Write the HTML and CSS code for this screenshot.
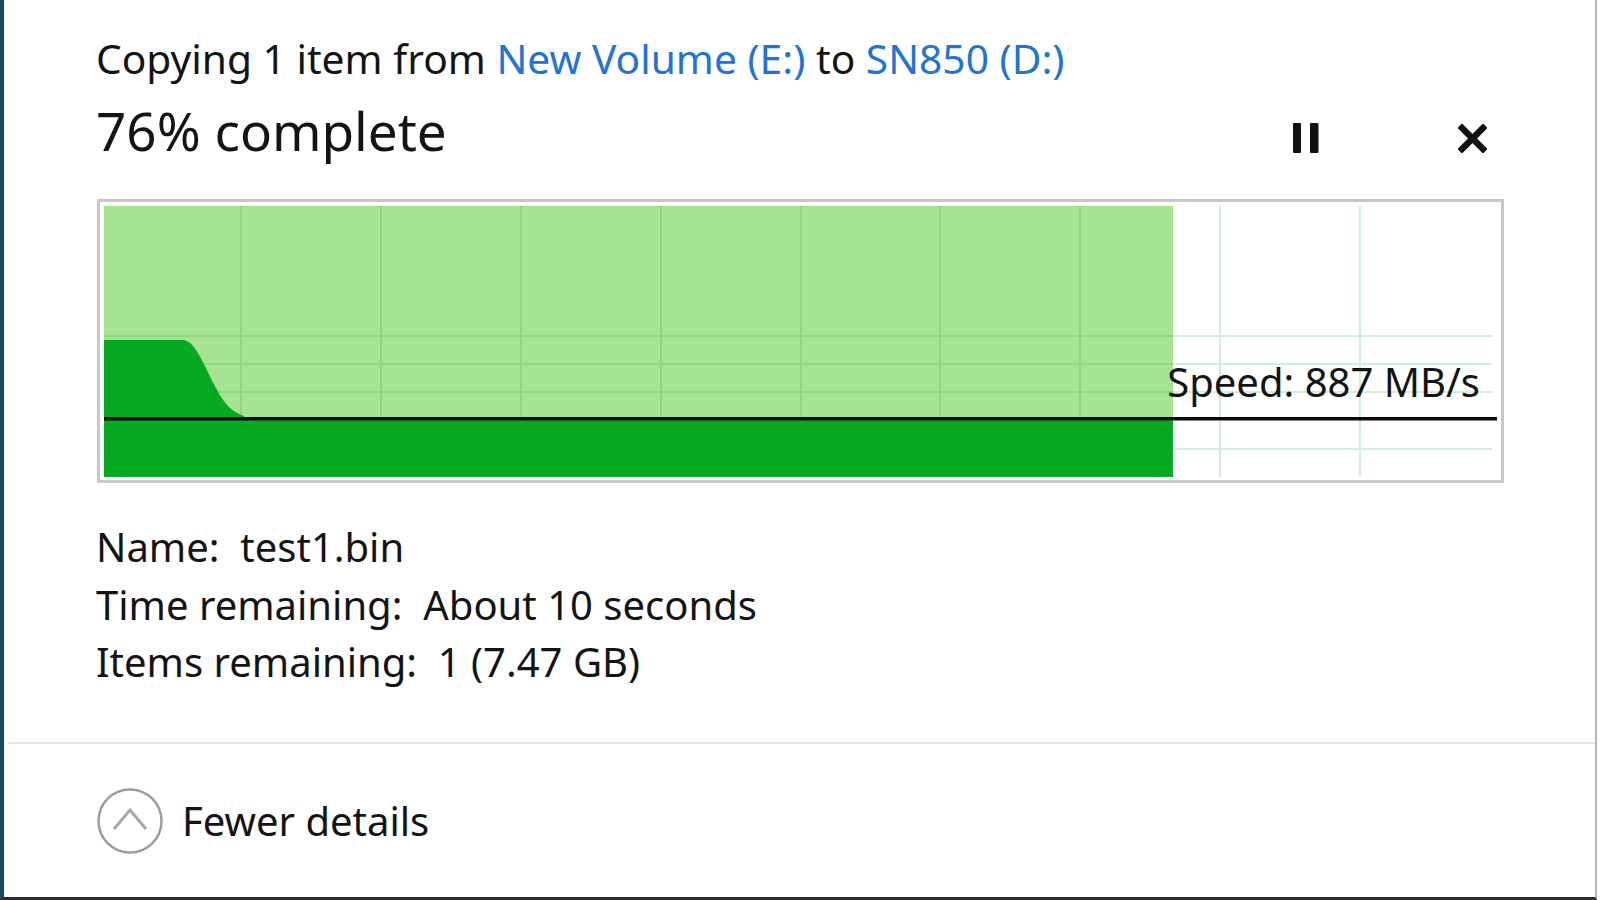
FILE: index.html
```html
<!DOCTYPE html>
<html lang="en">
<head>
    <meta charset="UTF-8">
    <meta name="viewport" content="width=device-width, initial-scale=1.0">
    <title>Copying</title>
    <link rel="stylesheet" href="styles.css">
</head>
<body>
    <div class="window">
        <div class="content">
            <div class="summary">
                Copying 1 item from <span class="link">New Volume (E:)</span> to <span class="link">SN850 (D:)</span>
            </div>

            <div class="title-row">
                <div class="percent">76% complete</div>
                <div class="controls">
                    <button class="icon-button" title="Pause">
                        <svg width="26" height="30" viewBox="0 0 26 30">
                            <rect x="0" y="0" width="8" height="30" rx="1" fill="#111"/>
                            <rect x="17" y="0" width="8.5" height="30" rx="1" fill="#111"/>
                        </svg>
                    </button>
                    <button class="icon-button" title="Cancel">
                        <svg width="29" height="29" viewBox="0 0 29 29">
                            <path d="M4 4 L25 25 M25 4 L4 25" stroke="#111" stroke-width="6.5" stroke-linecap="square"/>
                        </svg>
                    </button>
                </div>
            </div>

            <div class="graph">
                <div class="plot">
                    <svg width="1393" height="271" viewBox="0 0 1393 271">
                        <!-- grid behind the pending part -->
                        <g stroke="#d4ecda" stroke-width="2">
                            <line x1="137" y1="0" x2="137" y2="271"/>
                            <line x1="277" y1="0" x2="277" y2="271"/>
                            <line x1="417" y1="0" x2="417" y2="271"/>
                            <line x1="557" y1="0" x2="557" y2="271"/>
                            <line x1="697" y1="0" x2="697" y2="271"/>
                            <line x1="836" y1="0" x2="836" y2="271"/>
                            <line x1="976" y1="0" x2="976" y2="271"/>
                            <line x1="1116" y1="0" x2="1116" y2="271"/>
                            <line x1="1256" y1="0" x2="1256" y2="271"/>
                            <line x1="0" y1="130" x2="1388" y2="130"/>
                            <line x1="0" y1="158" x2="1388" y2="158"/>
                            <line x1="0" y1="186" x2="1388" y2="186"/>
                            <line x1="0" y1="243" x2="1388" y2="243"/>
                        </g>

                        <!-- progress so far -->
                        <rect x="0" y="0" width="1069" height="271" fill="#a6e392"/>
                        <g stroke="#92d77e" stroke-width="2">
                            <line x1="137" y1="0" x2="137" y2="212"/>
                            <line x1="277" y1="0" x2="277" y2="212"/>
                            <line x1="417" y1="0" x2="417" y2="212"/>
                            <line x1="557" y1="0" x2="557" y2="212"/>
                            <line x1="697" y1="0" x2="697" y2="212"/>
                            <line x1="836" y1="0" x2="836" y2="212"/>
                            <line x1="976" y1="0" x2="976" y2="212"/>
                            <line x1="0" y1="130" x2="1069" y2="130"/>
                            <line x1="0" y1="158" x2="1069" y2="158"/>
                            <line x1="0" y1="186" x2="1069" y2="186"/>
                        </g>

                        <!-- speed history -->
                        <path d="M0 134 H80 C92 136 100 160 112 182 C120 198 128 206 140 210 V214 H0 Z" fill="#07a923"/>
                        <rect x="0" y="212" width="1069" height="59" fill="#07a923"/>

                        <!-- current speed -->
                        <rect x="0" y="211" width="1393" height="3.5" fill="#0a0a0a"/>
                    </svg>
                    <span class="speed">Speed: 887 MB/s</span>
                </div>
            </div>

            <div class="details">
                <div>Name:&nbsp; test1.bin</div>
                <div>Time remaining:&nbsp; About 10 seconds</div>
                <div>Items remaining:&nbsp; 1 (7.47 GB)</div>
            </div>
        </div>

        <div class="separator"></div>

        <div class="footer">
            <button class="toggle">
                <svg width="66" height="66" viewBox="0 0 66 66">
                    <circle cx="33" cy="33" r="31.5" fill="none" stroke="#9d9d9d" stroke-width="2.5"/>
                    <polyline points="17,41 33,22 49,41" fill="none" stroke="#a8a8a8" stroke-width="3"/>
                </svg>
                <span>Fewer details</span>
            </button>
        </div>
    </div>
</body>
</html>
```

FILE: styles.css
```css
body {
    margin: 0;
    background-color: #ffffff;
    font-family: 'Noto Sans', 'Open Sans', sans-serif;
    color: #141414;
}

.window {
    width: 1597px;
    height: 900px;
    box-sizing: border-box;
    border-left: 4px solid #1b4a66;
    border-right: 2px solid #b4b4b4;
    border-bottom: 3px solid #2e2e2e;
    background-color: #ffffff;
    display: flex;
    flex-direction: column;
}

.content {
    padding: 33px 91px 0 92px;
}

.summary {
    font-size: 40.7px;
    line-height: 50px;
    white-space: nowrap;
}

.link {
    color: #2373d6;
}

.title-row {
    display: flex;
    margin-top: 18px;
}

.percent {
    font-size: 53px;
    line-height: 60px;
}

.controls {
    display: flex;
    align-items: center;
    gap: 139px;
    margin-left: auto;
    margin-right: 17px;
    margin-top: 22px;
    align-self: flex-start;
}

.icon-button {
    border: none;
    background: none;
    padding: 0;
    display: flex;
    cursor: pointer;
}

.graph {
    margin: 38px 0 0 1px;
    border: 3px solid #c7c7c7;
    padding: 4px 4px 3px 4px;
}

.plot {
    position: relative;
    height: 271px;
}

.plot svg {
    display: block;
}

.speed {
    position: absolute;
    top: 156px;
    right: 17px;
    font-size: 40px;
    line-height: 40px;
    white-space: nowrap;
}

.details {
    margin-top: 35px;
    font-size: 40px;
    line-height: 57.5px;
}

.separator {
    height: 2px;
    margin: 51px 0 0 4px;
    background-color: #e3e3e3;
}

.footer {
    padding: 44px 0 0 93px;
}

.toggle {
    display: flex;
    align-items: center;
    gap: 19px;
    border: none;
    background: none;
    padding: 0;
    font-family: inherit;
    font-size: 40px;
    line-height: 56px;
    color: #141414;
    cursor: pointer;
}

.toggle svg {
    display: block;
}
```
